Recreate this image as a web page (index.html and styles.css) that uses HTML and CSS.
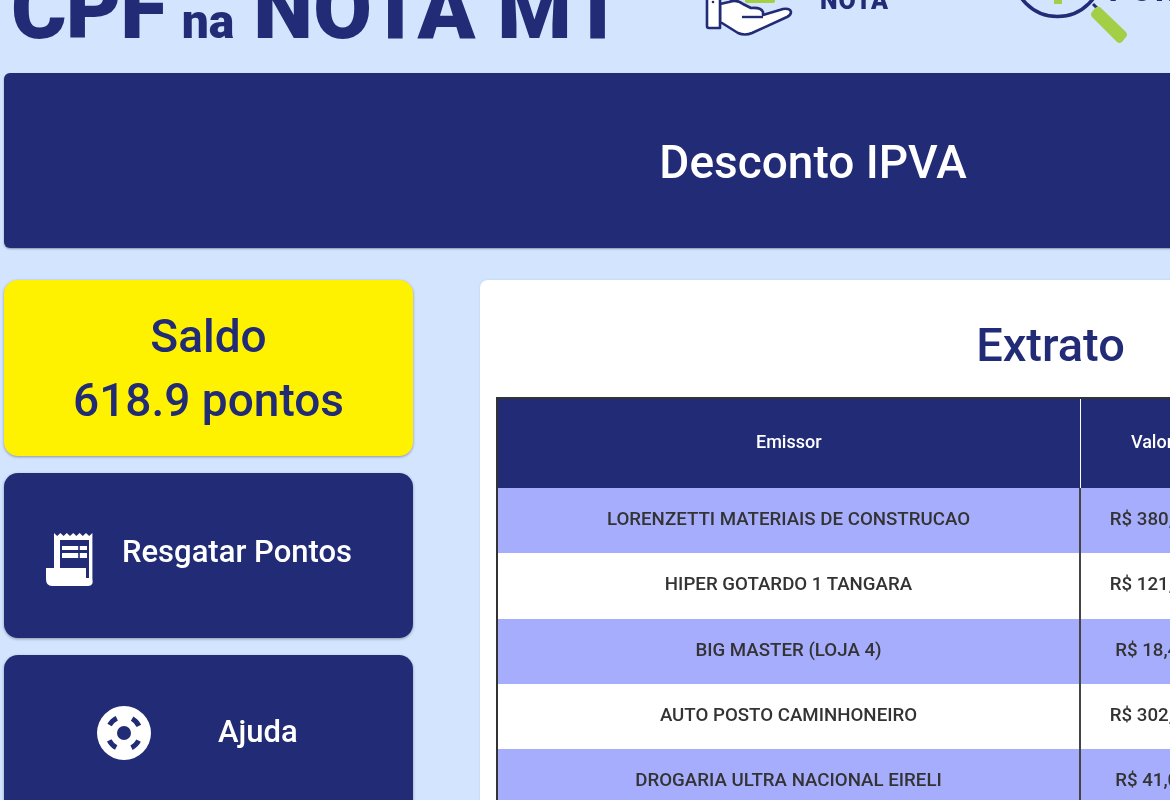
FILE: index.html
```html
<!DOCTYPE html>
<html lang="pt-BR">
<head>
<meta charset="utf-8">
<title>CPF na Nota MT</title>
<link rel="stylesheet" href="styles.css">
</head>
<body>
<div class="page">
  <header class="top">
    <div class="logo"><span class="logo-cpf">CPF</span><small>na</small><span class="logo-nota">NOTA MT</span></div>
    <nav class="top-nav">
      <div class="nav-item hand-item">
        <svg class="hand" width="90" height="40" viewBox="0 0 90 40" aria-hidden="true">
          <rect x="40" y="-6" width="30" height="9" rx="2" fill="#a2cf45"/>
          <path d="M15 4 L24 2 Q32 -1 38 4 L46 8 Q56 7 58 12 L58 15 L78 9 Q85 8 86 12 Q86 15 82 17 L47 33 Q40 36 33 33 L17 23 H15 Z" fill="#fff" stroke="#222b75" stroke-width="2.6" stroke-linejoin="round"/>
          <path d="M2 -4 V26 Q2 28 4 28 H15 V-4 Z" fill="#fff" stroke="#222b75" stroke-width="2.6" stroke-linejoin="round"/>
          <path d="M37 17 H58" fill="none" stroke="#222b75" stroke-width="2.4"/>
          <circle cx="8" cy="2" r="1.3" fill="#222b75"/>
        </svg>
        <span class="nav-label">NOTA</span>
      </div>
      <div class="nav-item lens-item">
        <svg class="lens" width="110" height="46" viewBox="0 0 110 46" aria-hidden="true">
          <rect x="35" y="-6" width="8" height="10" fill="#a2cf45"/>
          <circle cx="38.5" cy="-28" r="44.5" fill="none" stroke="#222b75" stroke-width="3.6"/>
          <path d="M74 4 L80 10" stroke="#222b75" stroke-width="3"/>
          <path d="M76 8 Q80 5 83 9 L107 32 Q109 35 107 37 L103 42 Q100 44 98 42 L73 17 Q71 14 73 12 Z" fill="#a2cf45"/>
        </svg>
        <span class="nav-label nav-label-wide">PONTOS</span>
      </div>
    </nav>
  </header>

  <section class="banner"><h1>Desconto IPVA</h1></section>

  <div class="content">
    <aside class="side">
      <div class="balance">
        <p>Saldo</p>
        <p>618.9 pontos</p>
      </div>
      <a class="action action-redeem">
        <svg width="50" height="54" viewBox="0 0 50 54" aria-hidden="true">
          <path d="M8 1 l3.2 3 3.2-3 3.2 3 3.2-3 3.2 3 3.2-3 3.2 3 3.2-3 3.2 3 3.2-3 3.2 3 3.2-3 V47 Q48 54 42 54 H6 Q0 54 0 47 V36 H8 Z" fill="#fff"/>
          <path d="M14 8 H43 V36 H14 Z" fill="#222b75"/>
          <path d="M40 36 H43 V46 H40 Z" fill="#222b75"/>
          <path d="M16 14 H41 V18 H16 Z M16 21 H41 V26 H16 Z" fill="#fff"/>
          <path d="M33 13 V27" stroke="#222b75" stroke-width="1.6"/>
        </svg>
        <span>Resgatar Pontos</span>
      </a>
      <a class="action action-help">
        <svg width="54" height="54" viewBox="0 0 54 54" aria-hidden="true">
          <circle cx="27" cy="27" r="27" fill="#fff"/>
          <circle cx="27" cy="27" r="7" fill="#222b75"/>
          <circle cx="27" cy="27" r="16.5" fill="none" stroke="#222b75" stroke-width="5" stroke-dasharray="10 15.92" stroke-dashoffset="-7.96"/>
        </svg>
        <span>Ajuda</span>
      </a>
    </aside>

    <main class="card">
      <h2>Extrato</h2>
      <table class="statement">
        <thead>
          <tr><th>Emissor</th><th>Valor</th><th>Data</th></tr>
        </thead>
        <tbody>
          <tr><td>LORENZETTI MATERIAIS DE CONSTRUCAO</td><td>R$ 380,00</td><td></td></tr>
          <tr><td>HIPER GOTARDO 1 TANGARA</td><td>R$ 121,00</td><td></td></tr>
          <tr><td>BIG MASTER (LOJA 4)</td><td>R$ 18,40</td><td></td></tr>
          <tr><td>AUTO POSTO CAMINHONEIRO</td><td>R$ 302,00</td><td></td></tr>
          <tr><td>DROGARIA ULTRA NACIONAL EIRELI</td><td>R$ 41,00</td><td></td></tr>
        </tbody>
      </table>
    </main>
  </div>
</div>
</body>
</html>
```

FILE: styles.css
```css
html, body {
  margin: 0;
  height: 800px;
  overflow: hidden;
  background: #d3e4fe;
}
.page {
  width: 1618px;
  margin-left: 4px;
  font-family: Roboto, "Noto Sans", sans-serif;
  color: #222b75;
  filter: blur(0.45px);
}
.top {
  height: 73px;
  overflow: hidden;
  display: flex;
  align-items: flex-start;
}
.logo {
  margin: -35px 0 0 7px;
  width: 691px;
  height: 97px;
  display: flex;
  align-items: baseline;
  font-size: 85px;
  line-height: 88px;
  font-weight: 900;
  white-space: nowrap;
  flex: none;
}
.logo-cpf { letter-spacing: -1px; }
.logo-nota { letter-spacing: 0.3px; }
.logo small {
  font-size: 48px;
  margin: 0 19px 0 16px;
}
.top-nav {
  display: flex;
  flex: none;
  align-items: flex-start;
}
.nav-item {
  display: flex;
  align-items: flex-start;
}
.hand-item {
  margin-left: 3px;
  width: 314px;
}
.hand { display: block; }
.nav-label {
  margin: -10px 0 0 25px;
  font-size: 25px;
  line-height: 22px;
  font-weight: 900;
  letter-spacing: 1px;
}
.lens { display: block; overflow: visible; }
.nav-label-wide {
  margin: -20px 0 0 -20px;
  font-size: 30px;
  letter-spacing: 3px;
}
.banner {
  height: 175px;
  box-sizing: border-box;
  padding-top: 3px;
  border-radius: 6px;
  background: #222b75;
  box-shadow: 0 1px 2px rgba(0,0,0,.35);
  display: flex;
  align-items: center;
  justify-content: center;
}
.banner h1 {
  margin: 0;
  font-size: 46px;
  font-weight: 500;
  color: #fff;
}
.content {
  display: flex;
  align-items: flex-start;
  gap: 67px;
  margin-top: 32px;
}
.side {
  width: 409px;
  flex: none;
  display: flex;
  flex-direction: column;
  gap: 17px;
}
.balance {
  height: 176px;
  border-radius: 14px;
  background: #fff200;
  box-shadow: 0 1px 3px rgba(0,0,0,.35);
  display: flex;
  flex-direction: column;
  justify-content: center;
  align-items: center;
  gap: 14px;
  font-size: 46px;
  font-weight: 500;
  line-height: 50px;
}
.balance p { margin: 0; }
.action {
  height: 165px;
  border-radius: 14px;
  background: #222b75;
  box-shadow: 0 1px 3px rgba(0,0,0,.35);
  color: #fff;
  display: flex;
  font-size: 31px;
  font-weight: 500;
}
.action-redeem { padding: 59px 0 0 42px; height: 106px; }
.action-redeem span { margin: 1px 0 0 26px; }
.action-help { padding: 51px 0 0 93px; height: 114px; }
.action-help span { margin: 7px 0 0 67px; }
.card {
  flex: 1;
  height: 640px;
  background: #fff;
  border-radius: 8px;
  padding: 0 17px 0 16px;
  box-shadow: 0 0 3px rgba(0,0,0,.08);
}
.card h2 {
  margin: 0;
  height: 117px;
  text-align: center;
  font-size: 47px;
  font-weight: 500;
  line-height: 130px;
}
.statement {
  width: 100%;
  table-layout: fixed;
  border-collapse: collapse;
  border: 2px solid #333;
  font-size: 18.7px;
  font-weight: 500;
  color: #333;
}
.statement th:nth-child(1) { width: 583px; }
.statement th:nth-child(2) { width: 144px; }
.statement th {
  box-sizing: border-box;
  height: 90px;
  padding: 0 0 4px;
  background: #222b75;
  color: #fff;
  font-size: 18px;
  font-weight: 500;
  border-left: 1.5px solid #fff;
}
.statement th:first-child { border-left: 0; }
.statement td {
  box-sizing: border-box;
  height: 65.25px;
  padding: 0 0 3px;
  text-align: center;
  white-space: nowrap;
  border-left: 2px solid #444;
}
.statement td:first-child { border-left: 0; }
.statement tbody tr:nth-child(odd) td { background: #a7adfd; }
```
